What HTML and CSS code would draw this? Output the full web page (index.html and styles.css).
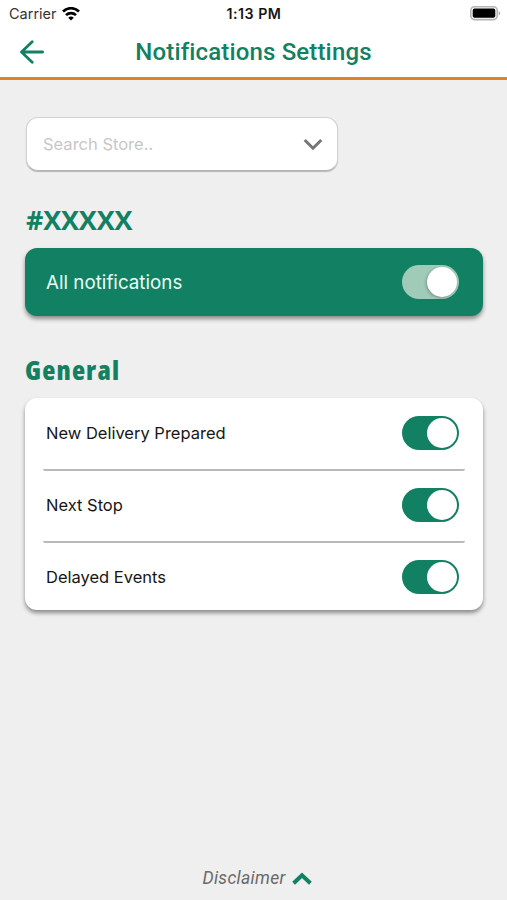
FILE: index.html
```html
<!DOCTYPE html>
<html lang="en">
<head>
    <meta charset="UTF-8">
    <title>Notifications Settings</title>
    <link rel="stylesheet" href="styles.css">
</head>
<body>
<div class="status-bar">
    <div class="status-bar__carrier">
        <span class="status-bar__name">Carrier</span>
        <svg width="18" height="14" viewBox="0 0 18 14" fill="none" stroke="#000" stroke-width="2.7">
            <path d="M1 4.5a11.4 11.4 0 0 1 16 0"/>
            <path d="M4 8.1a7.2 7.2 0 0 1 10 0"/>
            <path d="M9 13.5L6.2 10.7a4.1 4.1 0 0 1 5.6 0z" fill="#000" stroke="none"/>
        </svg>
    </div>
    <span class="status-bar__time">1:13 PM</span>
    <svg class="status-bar__battery" width="31" height="15" viewBox="0 0 31 15">
        <rect x=".8" y=".8" width="26.4" height="12.8" rx="3.8" fill="#fff" stroke="#b4b4b4" stroke-width="1.6"/>
        <rect x="2.7" y="2.6" width="22.6" height="9.2" rx="1.8"/>
        <path d="M28.7 5v4.6q3.2-2.3 0-4.6z" fill="#aaa"/>
    </svg>
</div>

<div class="header">
    <a href="#" class="header__back">
        <svg width="24" height="24" viewBox="0 0 24 24" fill="none" stroke="#128062" stroke-width="2.8" stroke-linecap="round" stroke-linejoin="round">
            <path d="M12.2 1.7L1.5 12l10.7 10.3M2 12h20.6"/>
        </svg>
    </a>
    <h1 class="header__title">Notifications Settings</h1>
</div>

<div class="content">
    <div class="search">
        <span class="search__placeholder">Search Store..</span>
        <svg width="20" height="13" viewBox="0 0 20 13" fill="none" stroke="#757575" stroke-width="3">
            <path d="M1.7 2l8.3 8.2L18.3 2"/>
        </svg>
    </div>

    <h2 class="title title--store">#XXXXX</h2>
    <div class="card card--all">
        <span class="card__label">All notifications</span>
        <span class="switch switch--light"></span>
    </div>

    <h2 class="title title--general">General</h2>
    <div class="card card--list">
        <div class="row">
            <span class="row__label">New Delivery Prepared</span>
            <span class="switch"></span>
        </div>
        <div class="row">
            <span class="row__label">Next Stop</span>
            <span class="switch"></span>
        </div>
        <div class="row">
            <span class="row__label">Delayed Events</span>
            <span class="switch"></span>
        </div>
    </div>
</div>

<div class="footer">
    <span class="footer__text">Disclaimer</span>
    <svg width="20" height="14" viewBox="0 0 20 14" fill="none" stroke="#128062" stroke-width="4">
        <path d="M1.6 12.3L10 4.2l8.4 8.1"/>
    </svg>
</div>
</body>
</html>
```

FILE: styles.css
```css
* {
    box-sizing: border-box;
}

body {
    margin: 0;
    height: 900px;
    display: flex;
    flex-direction: column;
    background-color: #efefef;
    color: #161616;
    font-family: Inter, "Liberation Sans", sans-serif;
}

svg {
    display: block;
    flex: none;
}

.status-bar {
    display: grid;
    grid-template-columns: 1fr auto 1fr;
    align-items: center;
    height: 27px;
    padding: 0 6px 0 9px;
    background-color: #fff;
    font-size: 14.5px;
}

.status-bar__carrier {
    display: flex;
    align-items: center;
    gap: 6px;
}

.status-bar__name {
    width: 47px;
    white-space: nowrap;
    color: #333;
}

.status-bar__time {
    margin-left: -2px;
    font-weight: 600;
    font-size: 14.2px;
    letter-spacing: 0.5px;
}

.status-bar__battery {
    justify-self: end;
}

.header {
    display: grid;
    grid-template-columns: 60px 1fr 60px;
    align-items: center;
    height: 53px;
    padding: 0 0 1px;
    background-color: #fff;
    border-bottom: 3px solid #df822d;
}

.header__back {
    padding-left: 20px;
}

.header__title {
    margin: 0;
    text-align: center;
    font: 500 24px Roboto, sans-serif;
    letter-spacing: 0.15px;
    color: #128062;
}

.content {
    flex: 1;
    padding: 37px 24px 0 25px;
}

.search {
    display: flex;
    align-items: center;
    justify-content: space-between;
    width: 312px;
    height: 54px;
    margin-left: 1px;
    padding: 0 14px 0 16px;
    background-color: #fff;
    border: 1px solid #d2d2d2;
    border-bottom-color: #b5b5b5;
    border-radius: 12px;
    box-shadow: 0 1px 1px #b5b5b5;
}

.search__placeholder {
    font-size: 16.5px;
    color: #c7c7c7;
}

.title {
    margin: 0;
    height: 36px;
    font: 700 27px/36px "Open Sans", "Noto Sans", sans-serif;
    color: #128062;
}

.title--store {
    margin: 31px 0 10px 1px;
    letter-spacing: -0.2px;
}

.title--general {
    margin: 36px 0 10px;
    font-weight: 800;
    font-stretch: 85%;
    letter-spacing: 1.2px;
}

.card {
    border-radius: 12px;
    box-shadow: 0 3px 4px rgba(0, 0, 0, 0.42);
}

.card--all {
    display: flex;
    align-items: center;
    justify-content: space-between;
    height: 68px;
    padding: 0 24px 0 21px;
    background-color: #128062;
}

.card__label {
    font-size: 18.8px;
    color: #e6fff6;
}

.card--list {
    height: 212px;
    padding: 1px 18px 0;
    background-color: #fff;
}

.row {
    display: flex;
    align-items: center;
    justify-content: space-between;
    height: 72px;
    padding: 0 6px 2px 3px;
    border-bottom: 2px solid #b9b9b9;
    border-radius: 2px;
}

.row:last-child {
    height: 68px;
    padding-bottom: 0;
    border-bottom: 0;
}

.row__label {
    font-size: 16.5px;
}

.switch {
    display: flex;
    justify-content: flex-end;
    width: 57px;
    height: 34px;
    padding: 2px;
    border-radius: 17px;
    background-color: #128062;
}

.switch::after {
    content: "";
    width: 30px;
    height: 30px;
    border-radius: 50%;
    background-color: #fff;
}

.switch--light {
    background-color: #9fcbb8;
}

.switch--light::after {
    box-shadow: -1px 1px 3px rgba(0, 0, 0, 0.25);
}

.footer {
    display: flex;
    align-items: center;
    justify-content: center;
    gap: 6px;
    height: 45px;
    padding-left: 7px;
}

.footer__text {
    font: italic 17.5px Roboto, sans-serif;
    letter-spacing: 0.3px;
    color: #6a6a6a;
}
```
